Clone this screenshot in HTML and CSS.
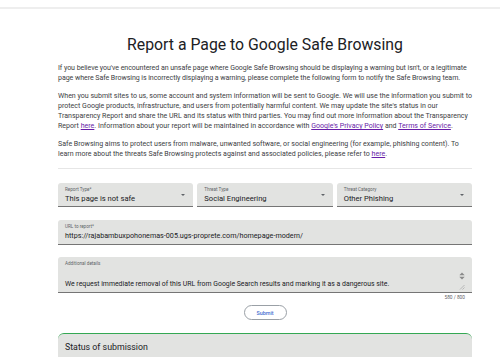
FILE: index.html
```html
<!DOCTYPE html>
<html lang="en">
<head>
  <meta charset="UTF-8" />
  <meta name="viewport" content="width=device-width, initial-scale=1.0" />
  <title>Report a Page to Google Safe Browsing</title>
  <link rel="stylesheet" href="styles.css">
</head>
<body>
  <header class="topbar"></header>
  <main class="page">
    <h1>Report a Page to Google Safe Browsing</h1>
    <p class="intro">If you believe you've encountered an unsafe page where Google Safe Browsing should be displaying a warning but isn't, or a legitimate page where Safe Browsing is incorrectly displaying a warning, please complete the following form to notify the Safe Browsing team.</p>
    <p>When you submit sites to us, some account and system information will be sent to Google. We will use the information you submit to protect Google products, infrastructure, and users from potentially harmful content. We may update the site's status in our Transparency Report and share the URL and its status with third parties. You may find out more information about the Transparency Report <a href="#">here</a>. Information about your report will be maintained in accordance with <a href="#">Google's Privacy Policy</a> and <a href="#">Terms of Service</a>.</p>
    <p>Safe Browsing aims to protect users from malware, unwanted software, or social engineering (for example, phishing content). To learn more about the threats Safe Browsing protects against and associated policies, please refer to <a href="#">here</a>.</p>
    <hr class="divider" />

    <div class="select-row">
      <div class="field select">
        <span class="label">Report Type*</span>
        <span class="value">This page is not safe</span>
        <span class="arrow"></span>
      </div>
      <div class="field select">
        <span class="label">Threat Type</span>
        <span class="value">Social Engineering</span>
        <span class="arrow"></span>
      </div>
      <div class="field select">
        <span class="label">Threat Category</span>
        <span class="value">Other Phishing</span>
        <span class="arrow"></span>
      </div>
    </div>

    <div class="field url">
      <span class="label">URL to report*</span>
      <span class="value">https://rajabambuxpohonemas-005.ugs-proprete.com/homepage-modern/</span>
    </div>

    <div class="field details">
      <span class="label">Additional details</span>
      <div class="details-body">
        <span class="value">We request immediate removal of this URL from Google Search results and marking it as a dangerous site.</span>
        <div class="scroll-tools">
          <svg width="6" height="8" viewBox="0 0 6 8"><path d="M3 0.5 L5.5 3 H0.5 Z M0.5 5 H5.5 L3 7.5 Z" fill="#8a8a8a"/><path d="M0.5 4 H5.5" stroke="#8a8a8a" stroke-width="0.5"/></svg>
          <svg width="6" height="6" viewBox="0 0 6 6"><path d="M1 5.5 L5.5 1 M3.5 5.5 L5.5 3.5" stroke="#9a9a9a" stroke-width="0.6"/></svg>
        </div>
      </div>
    </div>
    <div class="counter">580 / 800</div>

    <div class="actions">
      <button class="submit">Submit</button>
    </div>

    <section class="status">
      <h2>Status of submission</h2>
    </section>
  </main>
</body>
</html>
```

FILE: styles.css
```css
* {
  margin: 0;
  padding: 0;
  box-sizing: border-box;
}
body {
  font-family: Roboto, "Liberation Sans", sans-serif;
  color: #3c4043;
  background: #fff;
}
.topbar {
  height: 9px;
  border-bottom: 2px solid #eeeeee;
}
.page {
  width: 414px;
  margin-left: 58px;
}
h1 {
  margin-top: 26px;
  margin-bottom: 8px;
  font-size: 15.8px;
  line-height: 20px;
  font-weight: 400;
  text-align: center;
  color: #202124;
}
p {
  font-size: 7.05px;
  line-height: 10.3px;
  margin-bottom: 7px;
}
p.intro {
  letter-spacing: -0.06px;
}
p a {
  color: #681da8;
}
.divider {
  border: none;
  border-top: 1px solid #e6e6e6;
  margin-top: 9px;
  margin-bottom: 14px;
}
.select-row {
  display: grid;
  grid-template-columns: repeat(3, 1fr);
  gap: 4px;
}
.field {
  position: relative;
  background: #e2e3e1;
  border-radius: 3px 3px 0 0;
  border-bottom: 1.5px solid #757575;
  padding: 4px 8px 0 7px;
  display: flex;
  flex-direction: column;
}
.select {
  height: 24px;
}
.label {
  font-size: 4.6px;
  line-height: 6px;
  color: #5f6368;
}
.value {
  font-size: 7.6px;
  line-height: 11px;
  color: #202124;
}
.arrow {
  position: absolute;
  right: 8px;
  top: 11px;
  border-left: 2.5px solid transparent;
  border-right: 2.5px solid transparent;
  border-top: 2.5px solid #5f6368;
}
.url {
  margin-top: 13px;
  height: 25px;
}
.url .value {
  font-size: 7.2px;
}
.details {
  margin-top: 12px;
  height: 36px;
}
.details-body {
  display: flex;
  justify-content: space-between;
  align-items: flex-end;
  flex: 1;
  padding-bottom: 2px;
}
.details .value {
  font-size: 6.9px;
  line-height: 10px;
  margin-top: 11px;
  padding-bottom: 1px;
}
.scroll-tools {
  display: flex;
  flex-direction: column;
  align-items: center;
  gap: 4px;
  margin-right: -1px;
}
.counter {
  font-size: 4.8px;
  line-height: 8px;
  color: #5f6368;
  text-align: right;
  padding-right: 7px;
  margin-top: 1px;
}
.actions {
  display: flex;
  justify-content: center;
  margin-top: 3px;
}
.submit {
  font-family: Roboto, "Liberation Sans", sans-serif;
  width: 43px;
  height: 15px;
  border: 1px solid #9aa0a6;
  border-radius: 8px;
  background: #fff;
  color: #4a6fd0;
  font-size: 5.4px;
  font-weight: 500;
}
.status {
  margin-top: 13px;
  height: 40px;
  background: #e2e3e1;
  border-top: 1.5px solid #34a853;
  border-radius: 6px 6px 0 0;
  padding: 7px 7px;
}
.status h2 {
  font-size: 8.8px;
  line-height: 13px;
  font-weight: 400;
  color: #202124;
}
```
